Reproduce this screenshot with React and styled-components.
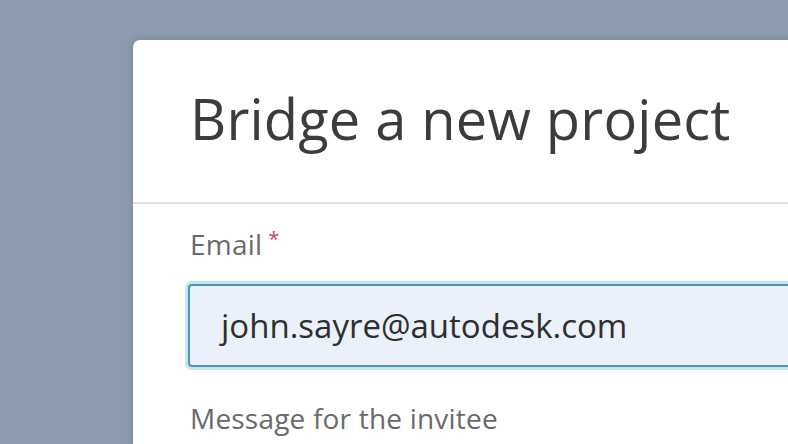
import React from 'react'
import styled, { createGlobalStyle } from 'styled-components'

const GlobalStyle = createGlobalStyle`
  html, body {
    margin: 0;
    padding: 0;
    height: 100%;
    overflow: hidden;
  }
  body {
    background: #8e9aae;
    font-family: "Open Sans", "Noto Sans", sans-serif;
  }
`

const Page = styled.div`
  padding: 40px 0 0 133px;
  height: 444px;
  box-sizing: border-box;
  overflow: hidden;
`

const Dialog = styled.div`
  width: 900px;
  height: 600px;
  background: #ffffff;
  border-radius: 7px 0 0 0;
  box-shadow: 0 0 6px rgba(40, 50, 70, 0.25);
`

const Header = styled.div`
  height: 164px;
  padding: 0 0 6px 57px;
  display: flex;
  align-items: center;
  border-bottom: 2px solid #e2e2e2;
  box-sizing: border-box;
`

const Title = styled.h1`
  margin: 0;
  font-size: 56px;
  font-weight: 400;
  letter-spacing: 0.2px;
  color: #3c3c3c;
`

const Body = styled.div`
  padding: 21px 0 0 55px;
`

const Field = styled.div`
  margin-bottom: ${p => p.gap || 0}px;
`

const Label = styled.label`
  display: block;
  margin: 0 0 ${p => p.space || 21}px 2px;
  font-size: 28px;
  line-height: 38px;
  letter-spacing: 0.2px;
  color: #6a6a6a;
`

const Required = styled.span`
  color: #c9466a;
  font-size: 20px;
  line-height: 20px;
  vertical-align: top;
  position: relative;
  top: 4px;
  margin-left: 6px;
`

const Input = styled.div`
  height: 83px;
  width: 700px;
  box-sizing: border-box;
  padding-left: 31px;
  display: flex;
  align-items: center;
  background: #ebf1fb;
  border: 2px solid #4f92bb;
  border-radius: 4px;
  box-shadow: 0 0 0 3px #c4e5f6;
  font-size: 33px;
  color: #2e2e2e;
`

export default function App() {
  return (
    <Page>
      <GlobalStyle />
      <Dialog>
        <Header>
          <Title>Bridge a new project</Title>
        </Header>
        <Body>
          <Field gap={32}>
            <Label>
              Email<Required>*</Required>
            </Label>
            <Input>john.sayre@autodesk.com</Input>
          </Field>
          <Field>
            <Label>Message for the invitee</Label>
          </Field>
        </Body>
      </Dialog>
    </Page>
  )
}
